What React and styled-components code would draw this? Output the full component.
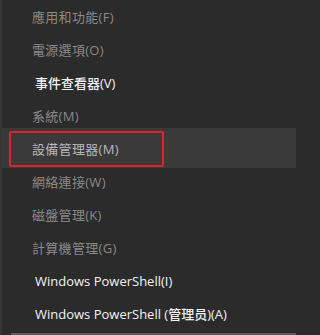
import styled, { createGlobalStyle } from "styled-components";

const GlobalStyle = createGlobalStyle`
  html, body {
    margin: 0;
    padding: 0;
    background: #2b2b2b;
  }
`;

const Menu = styled.div`
  width: 296px;
  height: 335px;
  box-sizing: border-box;
  background: #2b2b2b;
  border-left: 2px solid #363636;
  display: flex;
  flex-direction: column;
  overflow: hidden;
  font-family: "Open Sans", "Noto Sans CJK TC", "Noto Sans CJK SC", sans-serif;
`;

const Item = styled.div`
  position: relative;
  display: flex;
  align-items: center;
  flex: none;
  height: ${(p) => (p.active ? "40px" : "33px")};
  margin: ${(p) => (p.active ? "-4px 0 -3px" : "0")};
  padding-left: ${(p) => (p.bright ? "33px" : "30px")};
  background: ${(p) => (p.active ? "#3a3a3a" : "transparent")};
  color: ${(p) => (p.bright ? "#f2f2f2" : p.active ? "#b8b8b8" : "#8a8a8a")};
  font-size: 13px;
  font-weight: ${(p) => (p.bright ? 500 : 400)};
  letter-spacing: ${(p) => (p.bright ? "0" : "0.3px")};
  white-space: nowrap;
`;

const Highlight = styled.div`
  position: absolute;
  left: 7px;
  top: 3px;
  width: 155px;
  height: 36px;
  box-sizing: border-box;
  border: 2px solid #e0222c;
  border-radius: 2px;
`;

const Divider = styled.div`
  margin: auto 0 0 9px;
  height: 2px;
  background: #5a5a5a;
`;

const items = [
  { label: "應用和功能(F)" },
  { label: "電源選項(O)" },
  { label: "事件查看器(V)", bright: true },
  { label: "系統(M)" },
  { label: "設備管理器(M)", active: true },
  { label: "網絡連接(W)" },
  { label: "磁盤管理(K)" },
  { label: "計算機管理(G)" },
  { label: "Windows PowerShell(I)", bright: true },
  { label: "Windows PowerShell (管理员)(A)", bright: true },
];

const App = () => {
  return (
    <>
      <GlobalStyle />
      <Menu>
        {items.map((it) => (
          <Item key={it.label} bright={it.bright} active={it.active}>
            {it.label}
            {it.active && <Highlight />}
          </Item>
        ))}
        <Divider />
      </Menu>
    </>
  );
};

export default App;
